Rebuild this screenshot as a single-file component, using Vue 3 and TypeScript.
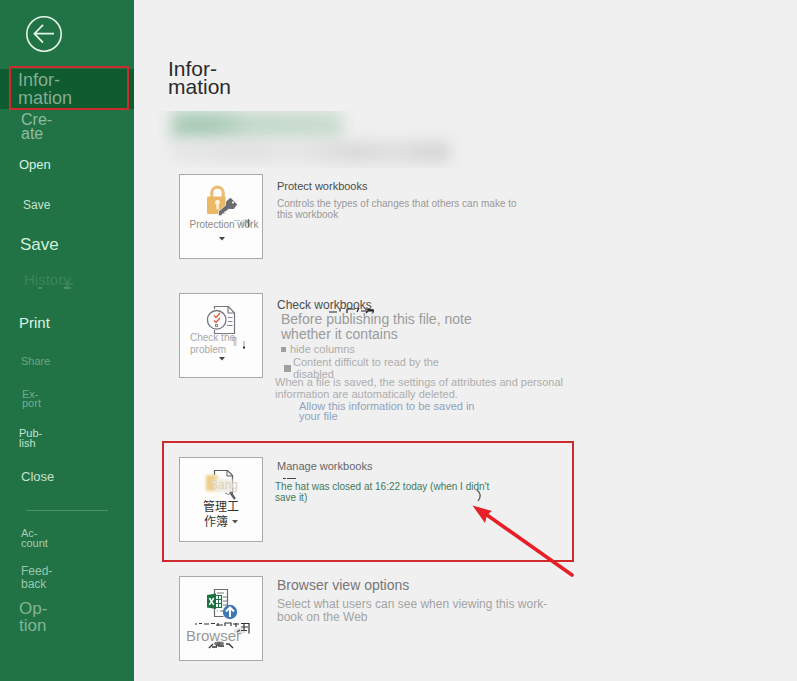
<script setup lang="ts">
interface NavItem {
  lines: string[]
  kind: string
}

const primary: NavItem[] = [
  { lines: ['Infor-', 'mation'], kind: 'info' },
  { lines: ['Cre-', 'ate'], kind: 'create' },
  { lines: ['Open'], kind: 'open' },
  { lines: ['Save'], kind: 'save' },
  { lines: ['Save'], kind: 'save-as' },
  { lines: ['History'], kind: 'history' },
  { lines: ['Print'], kind: 'print' },
  { lines: ['Share'], kind: 'share' },
  { lines: ['Ex-', 'port'], kind: 'export' },
  { lines: ['Pub-', 'lish'], kind: 'publish' },
  { lines: ['Close'], kind: 'close' },
]

const secondary: NavItem[] = [
  { lines: ['Ac-', 'count'], kind: 'account' },
  { lines: ['Feed-', 'back'], kind: 'feedback' },
  { lines: ['Op-', 'tion'], kind: 'option' },
]
</script>

<template>
  <div class="backstage">
    <aside class="sidebar">
      <button class="back" type="button" aria-label="Back">
        <svg viewBox="0 0 36 36" width="36" height="36" fill="none" stroke="#e4f5e9">
          <circle cx="18" cy="18" r="17.2" stroke-width="1.6" />
          <path d="M28 17.7H9M17 8.8 8.4 17.7 17 26.6" stroke-width="1.7" />
        </svg>
      </button>
      <nav>
        <a v-for="item in primary" :key="item.kind" href="#" class="item" :class="item.kind">
          <span v-for="line in item.lines" :key="line">{{ line }}</span>
          <svg v-if="item.kind === 'history'" class="trace" viewBox="0 0 52 16" width="52" height="16" aria-hidden="true">
            <path d="M14 13h4M40 13h7" stroke="#6aa886" />
            <path d="M38 9h11M44 5v7" stroke="#3f8a5f" stroke-width="2" opacity=".6" />
          </svg>
        </a>
        <hr class="divider" />
        <a v-for="item in secondary" :key="item.kind" href="#" class="item" :class="item.kind">
          <span v-for="line in item.lines" :key="line">{{ line }}</span>
        </a>
      </nav>
    </aside>

    <main class="content">
      <h1>Infor-<br />mation</h1>
      <div class="redacted" aria-hidden="true">
        <div class="haze green"></div>
        <div class="haze grey"></div>
      </div>

      <section class="row protect">
        <button class="tile" type="button">
          <svg class="art" viewBox="0 0 82 44" width="82" height="44">
            <path d="M31.8 23v-5.2a5.7 5.7 0 0 1 11.4 0V23" fill="none" stroke="#ebbd74" stroke-width="3.2" />
            <rect x="27" y="21.500" width="18.500" height="17.500" rx="1" fill="#ebb966" />
            <circle cx="37.500" cy="27.500" r="2.400" fill="#fff8ea" />
            <path d="M36.500 28.500h2.200v6h-2.200z" fill="#fff8ea" />
            <path d="M38.500 40.500v-4l9-8 3.500 3.500-5 4.500-1.500.3-.4 1.900-2 .4-.5 1.800z" fill="#696b70" stroke="#fdfdfd" stroke-width=".7" />
            <path d="m50.500 22.800 6.700 6.800-3.500 4.500h-4.200l-3.700-3.800.5-4z" fill="#696b70" />
            <circle cx="53" cy="27.500" r="1.100" fill="#fdfdfd" />
          </svg>
          <span class="label">Protection work</span>
          <svg class="caret" viewBox="0 0 6 4" width="6" height="4"><path d="M0 0h6L3 3.500z" /></svg>
          <svg class="smear" viewBox="0 0 82 83" aria-hidden="true">
            <ellipse cx="66" cy="48" rx="6" ry="4" fill="#777" opacity=".22" />
            <path d="M54 45.500h6" stroke="#999" opacity=".6" />
            <path d="M65 46h5M68.500 44v8" stroke="#444" stroke-width="1" opacity=".75" />
          </svg>
        </button>
        <div class="copy">
          <h2>Protect workbooks</h2>
          <p class="desc">Controls the types of changes that others can make to<br />this workbook</p>
        </div>
      </section>

      <section class="row check">
        <button class="tile" type="button">
          <svg class="art" viewBox="0 0 82 38" width="82" height="38">
            <path d="M34.500 15v-2.500h14l6 6.500v20.500h-20V36" fill="#fdfdfd" stroke="#74777c" stroke-width="1.200" />
            <path d="M48 12.500V19h6.500" fill="none" stroke="#74777c" stroke-width="1.200" />
            <path d="M48 23.500h4.500M48 27.500h4.500M47 31.500h5.500" stroke="#85888d" />
            <circle cx="36.700" cy="25.800" r="9.300" fill="#fdfdfd" stroke="#74777c" stroke-width="1.300" />
            <path d="m34 21.500 2 2 4-4.500M34 26.500l2 2 4-4.500" fill="none" stroke="#e0644a" stroke-width="1.500" />
            <rect x="35.500" y="30.500" width="2" height="2" fill="none" stroke="#85888d" />
          </svg>
          <span class="label left">Check the<br />problem</span>
          <svg class="caret tight" viewBox="0 0 6 4" width="6" height="4"><path d="M0 0h6L3 3.500z" /></svg>
          <svg class="smear" viewBox="0 0 82 83" aria-hidden="true">
            <path d="M52 44.500h5M55 44v8" stroke="#777" stroke-width="3" opacity=".35" />
            <path d="M64 47v5" stroke="#999" />
            <path d="M63 53.500h2" stroke="#222" stroke-width="2" />
          </svg>
        </button>
        <div class="copy">
          <h2 class="mid">Check workbooks</h2>
          <svg class="stray" viewBox="0 0 50 8" width="50" height="8" aria-hidden="true">
            <path d="M2 5h8M13 4.500v-3M20 6V2h8M30 5l2-4M34 4h13M38 2l8 1M42 3l-3 3M46 2v4" fill="none" stroke="#222" stroke-width="1.200" />
          </svg>
          <p class="lead">Before publishing this file, note<br />whether it contains</p>
          <ul>
            <li class="first">hide columns</li>
            <li class="second"><span>Content difficult to read by the<br />disabled</span></li>
          </ul>
          <p class="saved">When a file is saved, the settings of attributes and personal<br />information are automatically deleted.</p>
          <a class="allow" href="#">Allow this information to be saved in<br />your file</a>
        </div>
      </section>

      <section class="row manage">
        <button class="tile" type="button">
          <svg class="art" viewBox="0 0 82 42" width="82" height="42">
            <defs>
              <filter id="soft" x="-30%" y="-30%" width="160%" height="160%"><feGaussianBlur stdDeviation="1.500" /></filter>
            </defs>
            <path d="M34.500 17v-4.500h13l5 5V36" fill="none" stroke="#55585c" stroke-width="1.200" />
            <path d="M47 12.500V18h5" fill="none" stroke="#55585c" />
            <path d="M26 17h10l2 2v14H26z" fill="#efcd84" filter="url(#soft)" />
            <path d="M33 21h20v13H35z" fill="#f1ece1" filter="url(#soft)" />
            <path d="m50 34 5 7" stroke="#5d6064" stroke-width="2.300" />
            <path d="M45 35q4 3 6 0" fill="none" stroke="#85888d" />
            <text x="30" y="31" font-size="12" font-family="Liberation Sans, sans-serif" fill="#dcd3be">Bang</text>
          </svg>
          <span class="label cjk">管理工<br />作簿<svg class="inline-caret" viewBox="0 0 6 4" width="6" height="4"><path d="M0 0h6L3 3.500z" /></svg></span>
        </button>
        <div class="copy">
          <h2>Manage workbooks</h2>
          <p class="desc status">The hat was closed at 16:22 today (when I didn't<br />save it)</p>
        </div>
        <svg class="dash" viewBox="0 0 16 3" width="16" height="3" aria-hidden="true"><path d="M1 1.500h14" stroke="#444" stroke-dasharray="3 1 9 1" /></svg>
        <svg class="arrow" viewBox="0 0 110 90" width="110" height="90" aria-hidden="true">
          <path d="M10 3q6 5 1 11" fill="none" stroke="#555" stroke-width="1.200" />
          <path d="m20 28 85 60" stroke="#e61f28" stroke-width="3.600" stroke-linecap="round" />
          <path d="M5.500 18.500 25 24l-5 4-2 8z" fill="#e61f28" />
        </svg>
      </section>

      <section class="row browser">
        <button class="tile" type="button">
          <svg class="art" viewBox="0 0 82 51" width="82" height="51">
            <path d="M34.500 18v-5.500h13v25M34.500 30v9.500h9" fill="none" stroke="#686b70" stroke-width="1.200" />
            <path d="M37 16h7M43 20h4M43 24h4M43 28h4M37 34h1M40 34h4" stroke="#777a7e" />
            <path d="M35 18.500h6.500v12H35z" fill="#fff" stroke="#217346" stroke-width="1.200" />
            <path d="M36 22.500h5M36 26.500h5M38.500 19v11" stroke="#217346" />
            <path d="m27 18 9-1.500v15.500l-9-1.500z" fill="#187341" />
            <path d="m29.300 21 4.400 6.800M33.700 21l-4.400 6.800" stroke="#fff" stroke-width="1.500" />
            <circle cx="50" cy="35" r="7.200" fill="#3f78b5" />
            <path d="M50 40v-9M46 34.500l4-4 4 4" fill="none" stroke="#fff" stroke-width="2" />
          </svg>
          <span class="label large">Browser</span>
          <svg class="smear" viewBox="0 0 82 83" aria-hidden="true">
            <path d="M15 47h2M19 46.500h3M24 47h5M31 46.500h4M36 48h7M38 46v3M45 49v-3h6v3M53 47h6M56 46v4M61 46.500h8v10M61 50h7M64 46v7M61 53.500h6M57 55l3-2" fill="none" stroke="#333" stroke-width="1.200" />
            <path d="M29 71l4-4M32 70h5M36 69l4-3M38 69h6M46 67h3l4 4" fill="none" stroke="#333" stroke-width="1.300" />
            <ellipse cx="39" cy="66.500" rx="5" ry="2" fill="#555" opacity=".8" />
            <ellipse cx="60" cy="54" rx="6" ry="3" fill="#888" opacity=".25" />
          </svg>
        </button>
        <div class="copy">
          <h2 class="big">Browser view options</h2>
          <p class="view">Select what users can see when viewing this work-<br />book on the Web</p>
        </div>
      </section>
    </main>
  </div>
</template>

<style>
body {
  margin: 0;
  background: #f0f0f0;
}
</style>

<style scoped>
.backstage {
  display: flex;
  min-height: 100vh;
  font-family: "Liberation Sans", "Noto Sans CJK SC", sans-serif;
  background: #f0f0f0;
}
.sidebar {
  flex: 0 0 134px;
  background: #217346;
}
button {
  font-family: inherit;
  cursor: pointer;
}
.back {
  display: block;
  width: 36px;
  height: 36px;
  margin: 16px 0 17px 26px;
  padding: 0;
  border: 0;
  background: none;
}
.back svg {
  display: block;
}
.item {
  display: flex;
  flex-direction: column;
  justify-content: center;
  box-sizing: border-box;
  height: 40px;
  padding-left: 21px;
  color: #c6e2cf;
  font-size: 11px;
  line-height: 10px;
  text-decoration: none;
}
.info {
  position: relative;
  padding-left: 18px;
  background: #0f5c30;
  color: #84ac92;
  font-size: 18px;
  line-height: 18px;
}
.info::after {
  content: "";
  position: absolute;
  inset: -3px 5px -1px 9px;
  border: 2px solid #cf2a2e;
}
.create {
  height: 36px;
  color: #8fbd9f;
  font-size: 16px;
  line-height: 14px;
}
.open {
  padding-left: 19px;
  color: #d9f2e2;
  font-size: 13px;
}
.save {
  padding-left: 23px;
  font-size: 12px;
}
.save-as {
  padding-left: 20px;
  color: #d3efdd;
  font-size: 17px;
  line-height: 18px;
}
.history {
  position: relative;
  height: 38px;
  padding-left: 24px;
  padding-bottom: 8px;
  color: #39845a;
  font-size: 15px;
}
.trace {
  position: absolute;
  top: 10px;
  left: 24px;
}
.print {
  padding-left: 19px;
  color: #dcf5e4;
  font-size: 15px;
}
.share {
  height: 36px;
  color: #6ba483;
}
.export {
  padding-left: 22px;
  color: #76ab8b;
  line-height: 9px;
}
.publish {
  height: 38px;
  padding-left: 19px;
}
.close {
  font-size: 13px;
  line-height: 12px;
}
.divider {
  height: 1px;
  margin: 13px 26px 7px;
  border: 0;
  background: #4a9469;
}
.account {
  color: #a3ccb2;
}
.feedback {
  height: 40px;
  color: #9cc7ab;
  font-size: 12px;
  line-height: 13px;
}
.option {
  height: 38px;
  padding-left: 19px;
  color: #83b395;
  font-size: 17px;
  line-height: 17px;
}
.content {
  flex: 1;
  min-width: 0;
  padding: 60px 20px 20px 45px;
}
h1,
h2,
p,
ul {
  margin: 0;
  padding: 0;
  font-weight: normal;
}
h1 {
  margin-left: -11px;
  color: #2b2b2b;
  font-size: 21px;
  line-height: 18px;
}
.redacted {
  max-width: 310px;
  height: 57px;
  margin: 15px 0 6px -21px;
  overflow: hidden;
}
.haze {
  filter: blur(8px);
}
.green {
  width: 170px;
  height: 29px;
  margin-left: 14px;
  background: linear-gradient(90deg, #a9cbb6 25%, #c4d9cb 45%, #c9dccf);
}
.grey {
  height: 20px;
  margin: 2px 18px 0 14px;
  background: linear-gradient(90deg, #e6e6e6, #dfdfdf 30%, #e6e6e6 42%, #d6d6d6 66%, #dedede 80%, #d3d3d3 92%);
}
.row {
  display: flex;
  align-items: flex-start;
  gap: 14px;
}
.protect {
  margin-bottom: 34px;
}
.manage {
  position: relative;
  box-sizing: border-box;
  max-width: 412px;
  margin: 20px 0 14px -17px;
  padding: 14px 15px 18px;
  border: 2px solid #cf2a2e;
}
.tile {
  position: relative;
  display: flex;
  flex: 0 0 84px;
  flex-direction: column;
  align-items: center;
  box-sizing: border-box;
  height: 85px;
  padding: 0;
  border: 1px solid #a9a9a9;
  background: #fdfdfd;
  color: #8a8a8a;
}
.art {
  flex: none;
  display: block;
  overflow: visible;
}
.smear {
  position: absolute;
  inset: 0;
  width: 82px;
  height: 83px;
}
.label {
  padding-left: 6px;
  font-size: 10px;
  line-height: 12px;
  white-space: nowrap;
}
.left {
  align-self: flex-start;
  padding-left: 10px;
  color: #a8a8a8;
  text-align: left;
}
.cjk {
  padding-left: 0;
  color: #333;
  font-size: 12px;
  line-height: 15px;
}
.large {
  align-self: flex-start;
  padding-left: 6px;
  color: #999;
  font-size: 15px;
  line-height: 16px;
}
.caret {
  margin: 6px 0 0 2px;
  fill: #444;
}
.tight {
  margin-top: 1px;
}
.inline-caret {
  margin: 0 0 2px 4px;
  fill: #555;
}
.copy {
  position: relative;
  flex: 1;
  min-width: 0;
  padding-top: 5px;
  white-space: nowrap;
}
.manage .copy,
.browser .copy {
  padding-top: 2px;
}
h2 {
  color: #4c4c4c;
  font-size: 11px;
  line-height: 14px;
}
.mid {
  font-size: 12px;
}
.manage h2 {
  color: #666;
}
h2.big {
  color: #777;
  font-size: 14px;
}
.desc {
  margin-top: 5px;
  color: #999;
  font-size: 10px;
  line-height: 11px;
}
.status {
  margin: 8px 0 0 -2px;
  color: #427a5b;
}
.lead {
  margin-left: 4px;
  color: #9a9a9a;
  font-size: 14px;
  line-height: 15px;
}
ul {
  list-style: none;
  color: #adadad;
  font-size: 11px;
}
li {
  display: flex;
  align-items: center;
}
li::before {
  content: "";
  background: #a0a0a0;
}
.first {
  gap: 4px;
  padding-left: 4px;
  line-height: 14px;
}
.first::before {
  width: 5px;
  height: 5px;
}
.second {
  gap: 2px;
  padding-left: 7px;
  line-height: 12px;
}
.second::before {
  width: 7px;
  height: 7px;
}
.saved {
  margin: -4px 0 1px -2px;
  color: #adadad;
  font-size: 11px;
  line-height: 12px;
}
.allow {
  display: block;
  margin-left: 22px;
  color: #8fa3be;
  font-size: 11px;
  line-height: 10px;
  text-decoration: none;
}
.view {
  margin-top: 6px;
  color: #a3a3a3;
  font-size: 12px;
  line-height: 13px;
}
.stray {
  position: absolute;
  top: 14px;
  left: 50px;
}
.dash {
  position: absolute;
  top: 34px;
  left: 118px;
}
.arrow {
  position: absolute;
  top: 44px;
  right: -5px;
}
</style>
